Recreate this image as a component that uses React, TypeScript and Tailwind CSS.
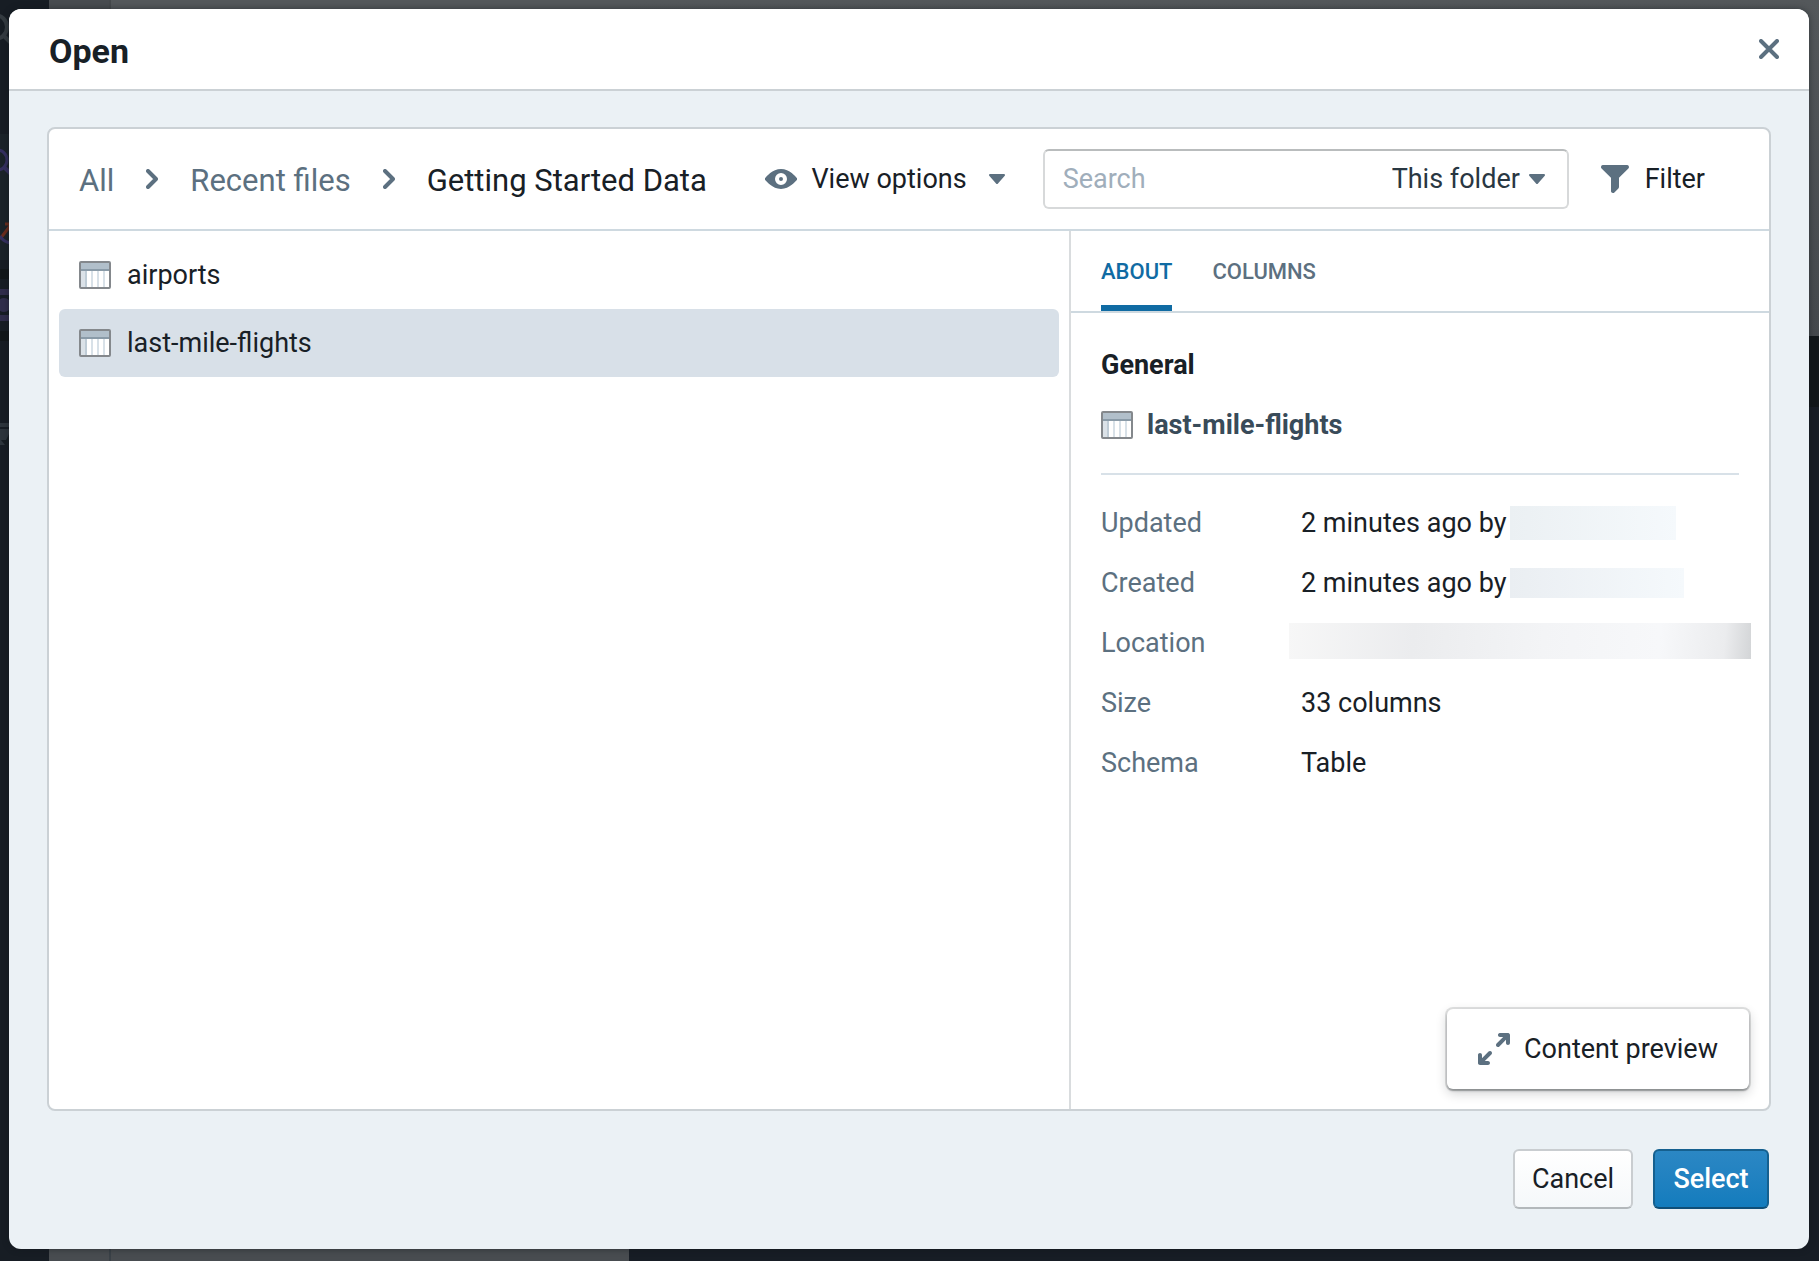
import { useState, type ReactNode } from 'react'

const FILES = ['airports', 'last-mile-flights']
const TABS = ['About', 'Columns']

function ChevronIcon() {
  return (
    <svg width="12" height="20" viewBox="0 0 12 20" fill="none" className="shrink-0 text-[#5c7080]" aria-hidden="true">
      <path d="M2 2l8 8-8 8" stroke="currentColor" strokeWidth="4" strokeLinecap="round" strokeLinejoin="round" />
    </svg>
  )
}

function CaretIcon() {
  return (
    <svg width="16" height="10" viewBox="0 0 16 10" className="shrink-0 text-[#5c7080]" aria-hidden="true">
      <path d="M1 0h14a1 1 0 01.75 1.66l-7 8a1 1 0 01-1.5 0l-7-8A1 1 0 011 0z" fill="currentColor" />
    </svg>
  )
}

function EyeIcon() {
  return (
    <svg width="32" height="32" viewBox="0 0 16 16" className="shrink-0 text-[#5c7080]" aria-hidden="true">
      <path
        d="M8 7a1 1 0 100 2 1 1 0 000-2zm7.8.35C15.5 7.05 12.3 3 8 3S.5 7.05.2 7.35a.97.97 0 000 1.3C.5 8.95 3.7 13 8 13s7.5-4.05 7.8-4.35a.97.97 0 000-1.3zM8 11a3 3 0 110-6 3 3 0 010 6z"
        fill="currentColor"
      />
    </svg>
  )
}

function FilterIcon() {
  return (
    <svg width="32" height="32" viewBox="0 0 16 16" className="shrink-0 text-[#5c7080]" aria-hidden="true">
      <path
        d="M13.99.99h-12a1.003 1.003 0 00-.71 1.71l4.71 4.71V14a1.003 1.003 0 001.71.71l2-2c.18-.18.29-.43.29-.71V7.41L14.7 2.7a1.003 1.003 0 00-.71-1.71z"
        fill="currentColor"
      />
    </svg>
  )
}

function MaximizeIcon() {
  return (
    <svg width="32" height="32" viewBox="0 0 16 16" className="shrink-0 text-[#5c7080]" aria-hidden="true">
      <path
        d="M5.99 8.99c-.28 0-.53.11-.71.29l-3.29 3.29v-1.59c0-.55-.45-1-1-1s-1 .45-1 1v4c0 .55.45 1 1 1h4c.55 0 1-.45 1-1s-.45-1-1-1H3.41L6.7 10.7a1.003 1.003 0 00-.71-1.71zm9-9h-4c-.55 0-1 .45-1 1s.45 1 1 1h1.59l-3.3 3.3a.99.99 0 00-.29.7 1.003 1.003 0 001.71.71l3.29-3.29V5c0 .55.45 1 1 1s1-.45 1-1V1c0-.56-.45-1.01-1-1.01z"
        fill="currentColor"
      />
    </svg>
  )
}

function TableIcon() {
  return (
    <svg width="32" height="28" viewBox="0 0 32 28" className="shrink-0" aria-hidden="true">
      <rect x="1" y="1" width="30" height="26" fill="#fff" />
      <rect x="2" y="2" width="28" height="6" fill="#b1bfca" />
      <rect x="2" y="8" width="28" height="2" fill="#8a9ba8" />
      <rect x="2" y="10" width="4" height="16" fill="#dbe2e8" />
      <rect x="6" y="10" width="2" height="16" fill="#bfccd6" />
      <path d="M13 10v16M19 10v16M25 10v16" stroke="#d8e1e8" strokeWidth="2" />
      <rect x="1" y="1" width="30" height="26" rx="1" fill="none" stroke="#84888c" strokeWidth="2" />
    </svg>
  )
}

// Dimmed application behind the dialog
function Backdrop() {
  return (
    <div className="absolute inset-0 flex bg-[#171d25]" aria-hidden="true">
      <div className="w-[49px] overflow-hidden bg-[#171d24]">
        <svg width="49" height="460" viewBox="0 0 49 460" fill="none">
          <path d="M0 134h9v126H0z" fill="#1b2329" />
          <circle cx="-5" cy="27" r="12" stroke="#343b41" strokeWidth="4" />
          <path d="M4 36l8 8" stroke="#343b41" strokeWidth="4" />
          <circle cx="-3" cy="160" r="10" stroke="#35305f" strokeWidth="3" />
          <path d="M4 167l8 8" stroke="#35305f" strokeWidth="4" />
          <path d="M0 239l10-13M5 224h5" stroke="#6b2c1d" strokeWidth="3" />
          <path d="M0 236c2 4 5 6 10 7" stroke="#35305f" strokeWidth="3" />
          <path d="M0 269h9v10H0zM0 331h9v10H0z" fill="#12171a" />
          <path d="M0 289h9v6H0zM0 315h9v6H0z" fill="#302d4b" />
          <circle cx="4" cy="305" r="7" fill="#302d4b" />
          <path d="M0 423h9v4H0zM0 429h9v16H0z" fill="#2d353c" />
          <path d="M1 440h5l3-6v16z" fill="#161d22" />
        </svg>
      </div>
      <div className="flex w-[580px] flex-col justify-between bg-[#484c50]">
        <div className="ml-[60px] h-[9px] border-l-2 border-[#45494c] bg-[#54585b]" />
        <div className="ml-[60px] h-3 border-l-2 border-[#3a4147]" />
      </div>
      <div className="flex-1">
        <div className="h-[336px] bg-linear-to-b from-[#54585b] to-[#45494d]" />
        <div className="h-[71px] bg-[#12171a]" />
      </div>
    </div>
  )
}

function DetailRow({ label, children }: { label: string; children: ReactNode }) {
  return (
    <div className="flex h-[60px] items-center">
      <dt className="w-[200px] shrink-0 text-[#5c7080]">{label}</dt>
      <dd className="flex min-w-0 flex-1 items-center gap-1">{children}</dd>
    </div>
  )
}

export default function App() {
  const [selected, setSelected] = useState('last-mile-flights')
  const [tab, setTab] = useState('About')

  return (
    <div className="relative flex min-h-screen flex-col pt-[9px] pr-[10px] pb-3 pl-[9px] font-['Roboto',sans-serif] text-[27px] leading-8 text-[#182026]">
      <Backdrop />

      <div
        role="dialog"
        aria-labelledby="dialog-title"
        className="relative flex flex-1 flex-col overflow-hidden rounded-xl bg-[#ebf1f5] shadow-[0_0_6px_rgba(16,22,26,0.5)]"
      >
        {/* Header */}
        <header className="flex h-[82px] items-center justify-between border-b-2 border-[#cbd1d5] bg-white pr-[30px] pl-10">
          <h1 id="dialog-title" className="pt-1 text-[34px] leading-10 font-bold">Open</h1>
          <button type="button" aria-label="Close">
            <svg width="20" height="20" viewBox="0 0 20 20" fill="none" className="text-[#5c7080]">
              <path d="M2 2l16 16M18 2L2 18" stroke="currentColor" strokeWidth="4" strokeLinecap="round" />
            </svg>
          </button>
        </header>

        <main className="mx-[38px] mt-9 flex flex-1 flex-col rounded-lg border-2 border-[#cbd1d5] bg-white">
          {/* Toolbar */}
          <div className="flex h-[102px] items-center border-b-2 border-[#ced9e0] pr-16 pl-[30px]">
            <nav aria-label="Breadcrumb" className="flex flex-1 items-center gap-8 text-[31px] whitespace-nowrap">
              <a href="#all" className="pt-1 text-[#5c7080]">All</a>
              <ChevronIcon />
              <a href="#recent" className="pt-1 text-[#5c7080]">Recent files</a>
              <ChevronIcon />
              <span aria-current="page" className="pt-1">Getting Started Data</span>
            </nav>

            <button type="button" className="mr-[38px] flex items-center gap-[14px] whitespace-nowrap">
              <EyeIcon />
              View options
              <span className="ml-2"><CaretIcon /></span>
            </button>

            <div className="mr-[30px] flex h-[60px] w-[526px] items-center rounded-md border-2 border-[#d7d9da] border-t-[#b9bcbd] pr-[22px] pl-[18px]">
              <input
                type="search"
                aria-label="Search"
                placeholder="Search"
                className="min-w-0 flex-1 outline-none placeholder:text-[#a0aebb]"
              />
              <div className="relative flex items-center">
                <select aria-label="Search scope" className="appearance-none pr-6 text-[#293742]">
                  <option>This folder</option>
                </select>
                <span className="pointer-events-none absolute right-0">
                  <CaretIcon />
                </span>
              </div>
            </div>

            <button type="button" className="flex items-center gap-[14px]">
              <FilterIcon />
              Filter
            </button>
          </div>

          <div className="flex flex-1">
            {/* File list */}
            <ul className="flex-1 p-[10px]">
              {FILES.map((name) => (
                <li key={name}>
                  <button
                    type="button"
                    onClick={() => setSelected(name)}
                    className={`flex h-[68px] w-full items-center gap-4 rounded-md px-5 ${
                      selected === name ? 'bg-[#d8e0e8]' : ''
                    }`}
                  >
                    <TableIcon />
                    {name}
                  </button>
                </li>
              ))}
            </ul>

            {/* Details */}
            <aside className="flex w-[700px] flex-col border-l-2 border-[#d9dcde]">
              <div role="tablist" className="flex gap-10 border-b-2 border-[#ced9e0] px-[30px]">
                {TABS.map((name) => (
                  <button
                    key={name}
                    type="button"
                    role="tab"
                    aria-selected={tab === name}
                    onClick={() => setTab(name)}
                    className={`h-20 border-b-6 pt-2 text-[22px] font-medium uppercase ${
                      tab === name ? 'border-[#106ba3] text-[#106ba3]' : 'border-transparent text-[#5c7080]'
                    }`}
                  >
                    {name}
                  </button>
                ))}
              </div>

              <div className="flex-1 px-[30px] pt-9">
                <h2 className="font-bold">General</h2>
                <div className="flex items-center gap-[14px] border-b-2 border-[#d8e1e8] pt-7 pb-8 font-bold text-[#394b59]">
                  <TableIcon />
                  last-mile-flights
                </div>

                <dl className="pt-[18px]">
                  <DetailRow label="Updated">
                    2 minutes ago by
                    <span className="h-[34px] w-[166px] bg-linear-to-r from-[#ebf0f3] to-[#f5f9fc]" />
                  </DetailRow>
                  <DetailRow label="Created">
                    2 minutes ago by
                    <span className="h-[30px] w-[174px] bg-linear-to-r from-[#eaeef2] to-[#f5f9fc]" />
                  </DetailRow>
                  <DetailRow label="Location">
                    <span className="-mr-3 mb-1 -ml-3 h-9 flex-1 bg-[linear-gradient(95deg,#f7f7f7_0%,#ebecee_27%,#f3f4f6_55%,#f7f8fa_80%,#ebecee_94%,#d3d5d7_100%)]" />
                  </DetailRow>
                  <DetailRow label="Size">33 columns</DetailRow>
                  <DetailRow label="Schema">Table</DetailRow>
                </dl>
              </div>

              <div className="flex justify-end p-5">
                <button
                  type="button"
                  className="flex h-20 w-[302px] items-center justify-center gap-[14px] rounded-md bg-white whitespace-nowrap shadow-[0_0_0_2px_rgba(16,22,26,0.12),0_2px_2px_rgba(16,22,26,0.3),0_4px_12px_rgba(16,22,26,0.2)]"
                >
                  <MaximizeIcon />
                  Content preview
                </button>
              </div>
            </aside>
          </div>
        </main>

        <footer className="flex justify-end gap-5 px-10 pt-[38px] pb-10">
          <button
            type="button"
            className="h-[60px] w-[120px] rounded-md border-2 border-[#c9cdd0] border-b-[#b3b8bb] bg-linear-to-b from-white to-[#f5f8fa]"
          >
            Cancel
          </button>
          <button
            type="button"
            className="h-[60px] w-[116px] rounded-md border-2 border-[#15608f] border-b-[#0f4f78] bg-linear-to-b from-[#2b87c4] to-[#137cbd] font-medium text-white"
          >
            Select
          </button>
        </footer>
      </div>
    </div>
  )
}
